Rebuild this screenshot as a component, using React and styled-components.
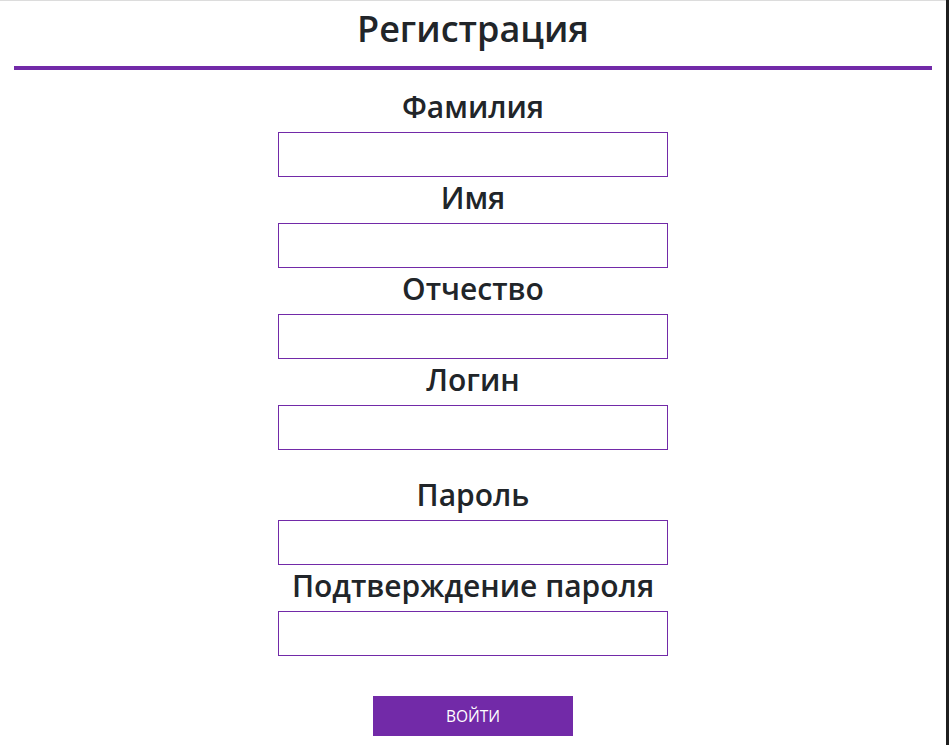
import React from 'react';
import styled, { createGlobalStyle } from 'styled-components';

const GlobalStyle = createGlobalStyle`
    body {
        margin: 0;
        background: #ffffff;
        font-family: "Open Sans", "Noto Sans", sans-serif;
        color: #212529;
    }
`;

const fields = [
    { label: 'Фамилия' },
    { label: 'Имя' },
    { label: 'Отчество' },
    { label: 'Логин' },
    { label: 'Пароль', type: 'password', spaced: true },
    { label: 'Подтверждение пароля', type: 'password' },
];

export default function App() {
    return (
        <Frame>
            <GlobalStyle />
            <Page>
                <Title>Регистрация</Title>
                <Divider />
                <Form onSubmit={e => e.preventDefault()}>
                    {fields.map(f => (
                        <Field key={f.label} spaced={f.spaced}>
                            <Label>{f.label}</Label>
                            <Input type={f.type || 'text'} />
                        </Field>
                    ))}
                    <Button type="submit">войти</Button>
                </Form>
            </Page>
            <Edge />
        </Frame>
    );
}

const Frame = styled.div`
    display: flex;
    height: 745px;
    overflow: hidden;
`;

const Page = styled.div`
    flex: 1;
    border-top: 1px solid #dcdcdc;
`;

const Edge = styled.div`
    width: 3px;
    background: #1f1f1f;
`;

const Title = styled.h1`
    margin: 0;
    padding-top: 3px;
    height: 62px;
    line-height: 50px;
    text-align: center;
    font-size: 36px;
    font-weight: 600;
`;

const Divider = styled.div`
    height: 4px;
    margin: 0 14px;
    background: #722aa8;
`;

const Form = styled.form`
    display: flex;
    flex-direction: column;
    align-items: center;
    padding-top: 16px;
`;

const Field = styled.div`
    display: flex;
    flex-direction: column;
    align-items: center;
    margin-top: ${p => (p.spaced ? '24px' : '0')};
`;

const Label = styled.label`
    height: 46px;
    line-height: 42px;
    font-size: 30px;
    font-weight: 600;
`;

const Input = styled.input`
    box-sizing: border-box;
    width: 390px;
    height: 45px;
    border: 1px solid #722aa8;
    border-radius: 0;
    outline: none;
    background: #fff;
    padding: 0 10px;
    font-size: 16px;
`;

const Button = styled.button`
    margin-top: 40px;
    width: 200px;
    height: 40px;
    border: none;
    background: #722aa8;
    color: #fff;
    font-family: "Open Sans", sans-serif;
    font-size: 15.5px;
    text-transform: uppercase;
    cursor: pointer;
`;
